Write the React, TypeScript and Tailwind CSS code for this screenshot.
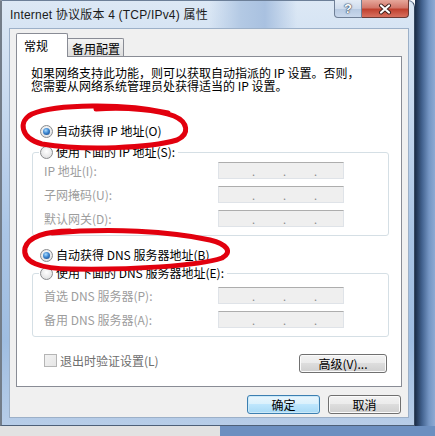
import React from "react";

const cjk = "font-['Noto_Sans_CJK_SC',sans-serif]";

const Radio = ({ checked }: { checked?: boolean }) => (
	<span className="w-[13px] h-[13px] shrink-0 rounded-full border border-[#8a8c8e] bg-[radial-gradient(circle_at_50%_40%,#ffffff,#d8d9da)] flex items-center justify-center">
		{checked && (
			<span className="w-[7px] h-[7px] rounded-full bg-[radial-gradient(circle_at_40%_35%,#a9dcff_0%,#3d86d0_45%,#123f7c_100%)]" />
		)}
	</span>
);

const IpBox = () => (
	<div className="w-[126px] h-[17px] shrink-0 bg-[#efefef] border border-[#dfe3e8] border-t-[#adadad] flex items-end pb-[1px] pl-[33px] gap-[29px] text-[11px] leading-none text-[#8a8a8a]">
		<span className="w-[2px]">.</span>
		<span className="w-[2px]">.</span>
		<span className="w-[2px]">.</span>
	</div>
);

const Field = ({ label }: { label: string }) => (
	<div className="flex items-center h-[17px]">
		<span className="w-[174px] text-[#9d9d9d] whitespace-nowrap">{label}</span>
		<IpBox />
	</div>
);

const Group = ({
	legend,
	fields,
	padTop,
}: {
	legend: string;
	fields: string[];
	padTop: string;
}) => (
	<fieldset className="ml-[1px] w-[357px] border border-[#d5dfe5] rounded-[3px]">
		<legend className="ml-[6px] px-[1px]">
			<span className="flex items-center gap-[3px] h-[16px] pr-[2px]">
				<Radio />
				<span className="whitespace-nowrap">{legend}</span>
			</span>
		</legend>
		<div className={`flex flex-col gap-[7px] pl-[11px] pb-[8px] ${padTop}`}>
			{fields.map((f) => (
				<Field key={f} label={f} />
			))}
		</div>
	</fieldset>
);

const WinButton = ({
	children,
	primary,
	className,
}: {
	children: React.ReactNode;
	primary?: boolean;
	className?: string;
}) => (
	<div
		className={`h-[19px] rounded-[3px] border flex items-center justify-center text-[12px] leading-none text-black ${
			primary
				? "border-[#3c7fb1] bg-[linear-gradient(180deg,#eaf6fd_0%,#d9f0fc_49%,#bee6fd_50%,#a7d9f5_100%)] shadow-[inset_0_0_0_1px_#cbe9f9]"
				: "border-[#707070] bg-[linear-gradient(180deg,#f2f2f2_0%,#ebebeb_49%,#dddddd_50%,#cfcfcf_100%)] shadow-[inset_0_0_0_1px_#fbfbfb]"
		} ${className ?? ""}`}
	>
		{children}
	</div>
);

export default function App() {
	return (
		<div className={`relative w-[435px] h-[436px] overflow-hidden flex flex-col ${cjk}`}>
			<div className="flex h-[426px]">
				{/* dialog window */}
				<div className="w-[415px] h-[426px] flex flex-col pl-[7px] pr-[5px] pb-[7px] border-l-[2px] border-l-[#737d89] border-t border-t-[#6c7f98] border-r border-r-[#34465e] border-b border-b-[#4d6078] rounded-tr-[7px] bg-[linear-gradient(180deg,#dce8f5_0%,#cbdcf0_20%,#aac5e5_55%,#9fbde1_80%,#b7cde8_100%)]">
					<div className="h-[27px] flex justify-between items-start bg-[linear-gradient(90deg,transparent_0%,transparent_50%,#b3c9e4_58%,#a9c1e0_64%,transparent_72%)]">
						<span className="pl-[1px] pt-[6px] text-[12px] leading-[16px] text-[#1b1b1b] whitespace-nowrap font-['Liberation_Sans','Noto_Sans_CJK_SC',sans-serif] tracking-[0.2px]">
							Internet 协议版本 4 (TCP/IPv4) 属性
						</span>
						<div className="flex -mt-[1px]">
							<div className="w-[28px] h-[18px] rounded-bl-[4px] border border-[#6f7f96] border-t-0 bg-[linear-gradient(180deg,#e4ecf6_0%,#cfdced_50%,#b6c9e1_51%,#c9d8ec_100%)] flex items-center justify-center text-[13px] font-bold leading-none text-white font-['Liberation_Sans',sans-serif] [text-shadow:0_0_1px_#33465f,0_0_1px_#33465f,0_0_2px_#33465f]">
								?
							</div>
							<div className="w-[47px] h-[18px] rounded-br-[4px] border border-[#6b3a35] border-t-0 border-l-0 bg-[linear-gradient(180deg,#e6a79b_0%,#d3776a_45%,#c0412f_55%,#d8705f_100%)] flex items-center justify-center">
								<svg width="16" height="12" viewBox="0 0 16 12">
									<path d="M4 2.5 L12 9.5 M12 2.5 L4 9.5" stroke="#3d1f1b" strokeWidth="4" strokeLinecap="round" />
									<path d="M4 2.5 L12 9.5 M12 2.5 L4 9.5" stroke="#ffffff" strokeWidth="2.2" strokeLinecap="round" />
								</svg>
							</div>
						</div>
					</div>

					{/* client area */}
					<div className="flex-1 flex flex-col border border-[#9cb0c8] bg-[#f0f0f0] px-[6px] pt-[4px] text-[12px] leading-[12px] text-black">
						<div className="flex items-end h-[23px]">
							<div className="relative z-10 w-[52px] h-[24px] -mb-[1px] bg-white border border-[#898c95] border-b-0 rounded-t-[2px] pl-[7px] pt-[6px] text-[12px] leading-[12px]">
								常规
							</div>
							<div className="w-[56px] h-[18px] border border-l-0 border-b-0 border-[#898c95] rounded-tr-[2px] bg-[linear-gradient(180deg,#f4f4f4,#dcdcdc)] pl-[4px] pt-[4px] text-[12px] leading-[12px]">
								备用配置
							</div>
						</div>

						<div className="h-[331px] border border-[#898c95] bg-white pl-[14px]">
							<div className="pt-[9px] whitespace-nowrap leading-[13px]">
								<div>如果网络支持此功能，则可以获取自动指派的 IP 设置。否则，</div>
								<div>您需要从网络系统管理员处获得适当的 IP 设置。</div>
							</div>

							<div className="mt-[31px] h-[16px] pl-[9px] flex items-center gap-[3px]">
								<Radio checked />
								<span>自动获得 IP 地址(O)</span>
							</div>

							<div className="mt-[5px]">
								<Group
									legend="使用下面的 IP 地址(S):"
									fields={["IP 地址(I):", "子网掩码(U):", "默认网关(D):"]}
									padTop="pt-[2px]"
								/>
							</div>

							<div className="mt-[11px] h-[16px] pl-[9px] flex items-center gap-[3px]">
								<Radio checked />
								<span>自动获得 DNS 服务器地址(B)</span>
							</div>

							<div className="mt-[2px]">
								<Group
									legend="使用下面的 DNS 服务器地址(E):"
									fields={["首选 DNS 服务器(P):", "备用 DNS 服务器(A):"]}
									padTop="pt-[6px]"
								/>
							</div>

							<div className="mt-[17px] ml-[13px] w-[343px] flex justify-between items-start">
								<div className="flex items-center gap-[3px] h-[13px]">
									<span className="w-[13px] h-[13px] border border-[#b5b5b5] bg-[linear-gradient(135deg,#f2f2f2,#e6e6e6)]" />
									<span className="text-[#6e6e6e]">退出时验证设置(L)</span>
								</div>
								<WinButton className="w-[88px]">高级(V)...</WinButton>
							</div>
						</div>

						<div className="mt-[8px] flex justify-end gap-[8px] pr-[1px]">
							<WinButton primary className="w-[73px]">确定</WinButton>
							<WinButton className="w-[73px]">取消</WinButton>
						</div>
					</div>
				</div>
				{/* desktop behind */}
				<div className="flex-1 bg-[linear-gradient(90deg,#1b2d47_0%,#42628f_35%,#7596c4_70%,#8eaad3_100%)]" />
			</div>
			<div className="flex flex-1">
				<div className="w-[220px] bg-[#e2e2e2]" />
				<div className="flex-1 bg-[#6c8fc0]" />
			</div>

			{/* red hand-drawn marks */}
			<svg className="absolute inset-0 pointer-events-none" width="435" height="436" viewBox="0 0 435 436">
				<path
					d="M168 113 C125 103, 55 104, 32 114 C18 121, 20 138, 42 144 C85 151, 150 148, 177 140 C190 134, 188 122, 174 116 C158 110, 128 107, 96 109"
					fill="none"
					stroke="#e2000e"
					strokeWidth="5"
					strokeLinecap="round"
				/>
				<path
					d="M70 231 C46 231, 28 237, 25 248 C22 262, 40 269, 72 269 C130 270, 198 266, 222 258 C233 252, 227 244, 210 240 C170 231, 110 228, 52 233"
					fill="none"
					stroke="#e2000e"
					strokeWidth="5"
					strokeLinecap="round"
				/>
			</svg>
		</div>
	);
}
